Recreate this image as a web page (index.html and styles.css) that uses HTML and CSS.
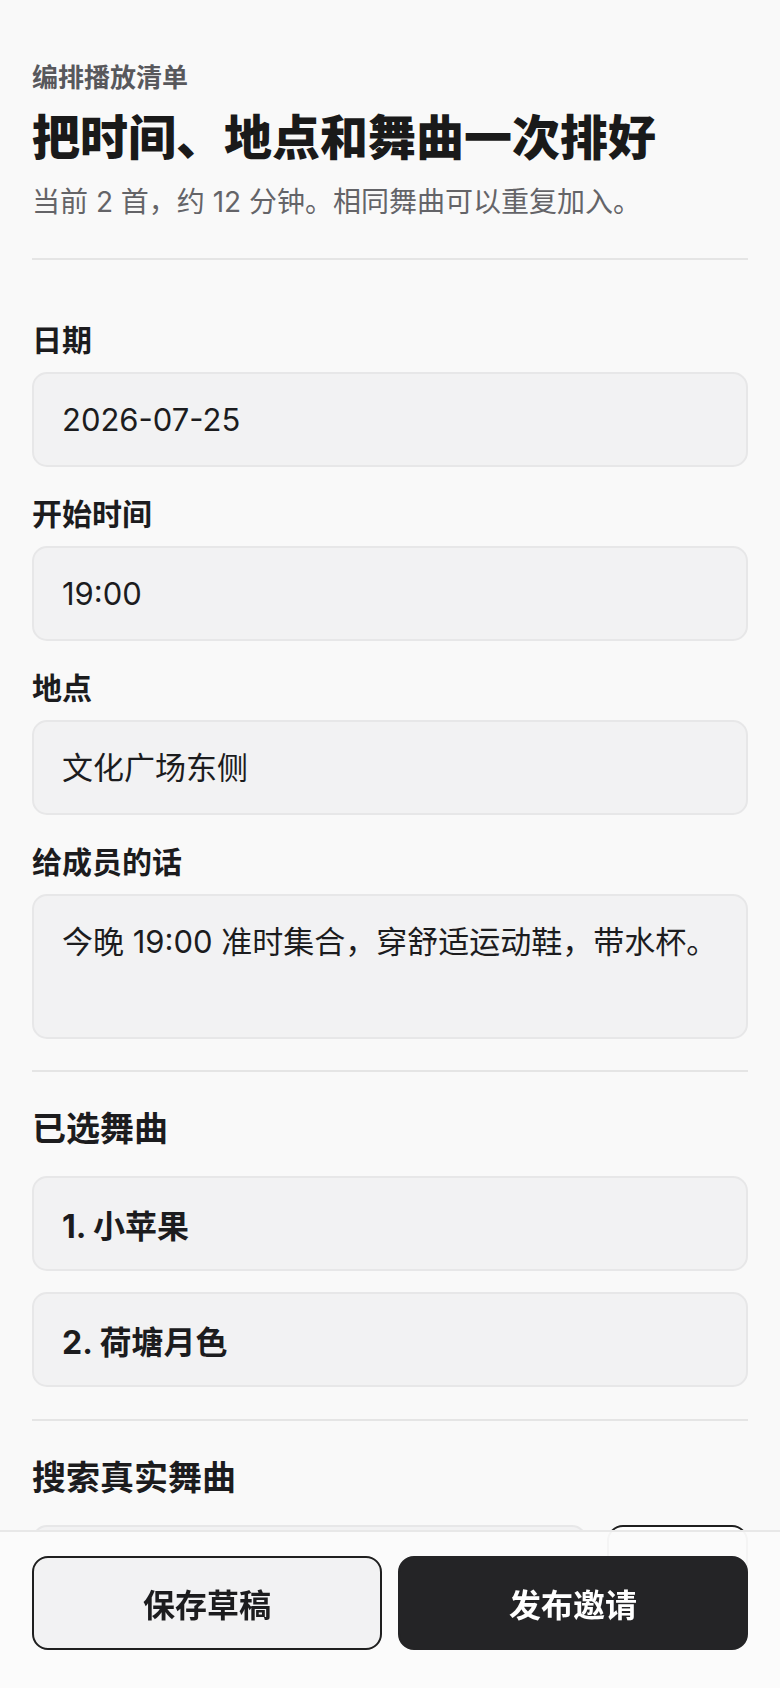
FILE: index.html
```html
<!DOCTYPE html>
<html lang="zh-CN">
<head>
<meta charset="utf-8">
<title>编排播放清单</title>
<link rel="stylesheet" href="styles.css">
</head>
<body>
<main class="page">
  <header class="intro">
    <div class="eyebrow">编排播放清单</div>
    <h1 class="title">把时间、地点和舞曲一次排好</h1>
    <p class="subtitle">当前 2 首，约 12 分钟。相同舞曲可以重复加入。</p>
  </header>

  <section class="form">
    <label class="field">
      <span class="field-label">日期</span>
      <span class="input">2026-07-25</span>
    </label>
    <label class="field">
      <span class="field-label">开始时间</span>
      <span class="input">19:00</span>
    </label>
    <label class="field">
      <span class="field-label">地点</span>
      <span class="input">文化广场东侧</span>
    </label>
    <label class="field">
      <span class="field-label">给成员的话</span>
      <span class="input textarea">今晚 19:00 准时集合，穿舒适运动鞋，带水杯。</span>
    </label>
  </section>

  <section class="section">
    <h2 class="section-title">已选舞曲</h2>
    <ol class="song-list">
      <li class="song">1. 小苹果</li>
      <li class="song">2. 荷塘月色</li>
    </ol>
  </section>

  <section class="section">
    <h2 class="section-title">搜索真实舞曲</h2>
    <div class="search-row">
      <span class="input search-input"></span>
      <button class="search-btn" aria-label="搜索"></button>
    </div>
  </section>
</main>

<footer class="action-bar">
  <button class="btn btn-secondary">保存草稿</button>
  <button class="btn btn-primary">发布邀请</button>
</footer>
</body>
</html>
```

FILE: styles.css
```css
* {
  box-sizing: border-box;
}

html, body {
  margin: 0;
  padding: 0;
}

body {
  background: #f9f9f9;
  color: #1c1c1e;
  font-family: "Inter", "Noto Sans CJK SC", sans-serif;
}

.page {
  padding: 60px 32px 240px;
}

.intro {
  border-bottom: 2px solid #e5e5e5;
  padding-bottom: 36px;
}

.eyebrow {
  font-size: 26px;
  line-height: 36px;
  font-weight: 700;
  color: #58585c;
}

.title {
  margin: 12px 0 0;
  font-size: 48px;
  line-height: 60px;
  font-weight: 900;
  color: #1a1a1a;
}

.subtitle {
  margin: 14px 0 0;
  font-size: 28px;
  line-height: 40px;
  color: #646468;
}

.form {
  display: flex;
  flex-direction: column;
  gap: 27px;
  padding: 60px 0 31px;
  border-bottom: 2px solid #e5e5e5;
}

.field {
  display: flex;
  flex-direction: column;
  gap: 12px;
}

.field-label {
  font-size: 30px;
  line-height: 40px;
  font-weight: 700;
}

.input {
  display: block;
  height: 95px;
  padding: 23px 28px;
  font-size: 31px;
  line-height: 45px;
  background: #f2f2f3;
  border: 2px solid #e7e7e8;
  border-radius: 15px;
  color: #1c1c1e;
}

.textarea {
  height: 145px;
}

.section {
  padding: 34px 0 32px;
  border-bottom: 2px solid #e5e5e5;
}

.section:last-child {
  border-bottom: none;
}

.section-title {
  margin: 0;
  font-size: 34px;
  line-height: 46px;
  font-weight: 700;
}

.song-list {
  list-style: none;
  margin: 24px 0 0;
  padding: 0;
  display: flex;
  flex-direction: column;
  gap: 21px;
}

.song {
  height: 95px;
  padding: 0 28px;
  display: flex;
  align-items: center;
  font-size: 32px;
  font-weight: 700;
  background: #f2f2f3;
  border: 2px solid #e7e7e8;
  border-radius: 15px;
}

.search-row {
  margin-top: 24px;
  display: flex;
  gap: 20px;
}

.search-input {
  flex: 1;
}

.search-btn {
  width: 141px;
  height: 95px;
  background: #ffffff;
  border: 2px solid #1f1f1f;
  border-radius: 16px;
}

.action-bar {
  position: fixed;
  left: 0;
  right: 0;
  bottom: 0;
  height: 158px;
  padding: 24px 32px 38px;
  display: flex;
  gap: 16px;
  background: rgba(251, 251, 251, 0.97);
  border-top: 2px solid #e8e8e8;
}

.btn {
  flex: 1;
  height: 94px;
  border-radius: 16px;
  font-family: inherit;
  font-size: 32px;
  font-weight: 700;
}

.btn-secondary {
  background: #f2f2f3;
  border: 2px solid #1f1f1f;
  color: #1c1c1e;
}

.btn-primary {
  background: #242426;
  border: 2px solid #242426;
  color: #ffffff;
}
```
